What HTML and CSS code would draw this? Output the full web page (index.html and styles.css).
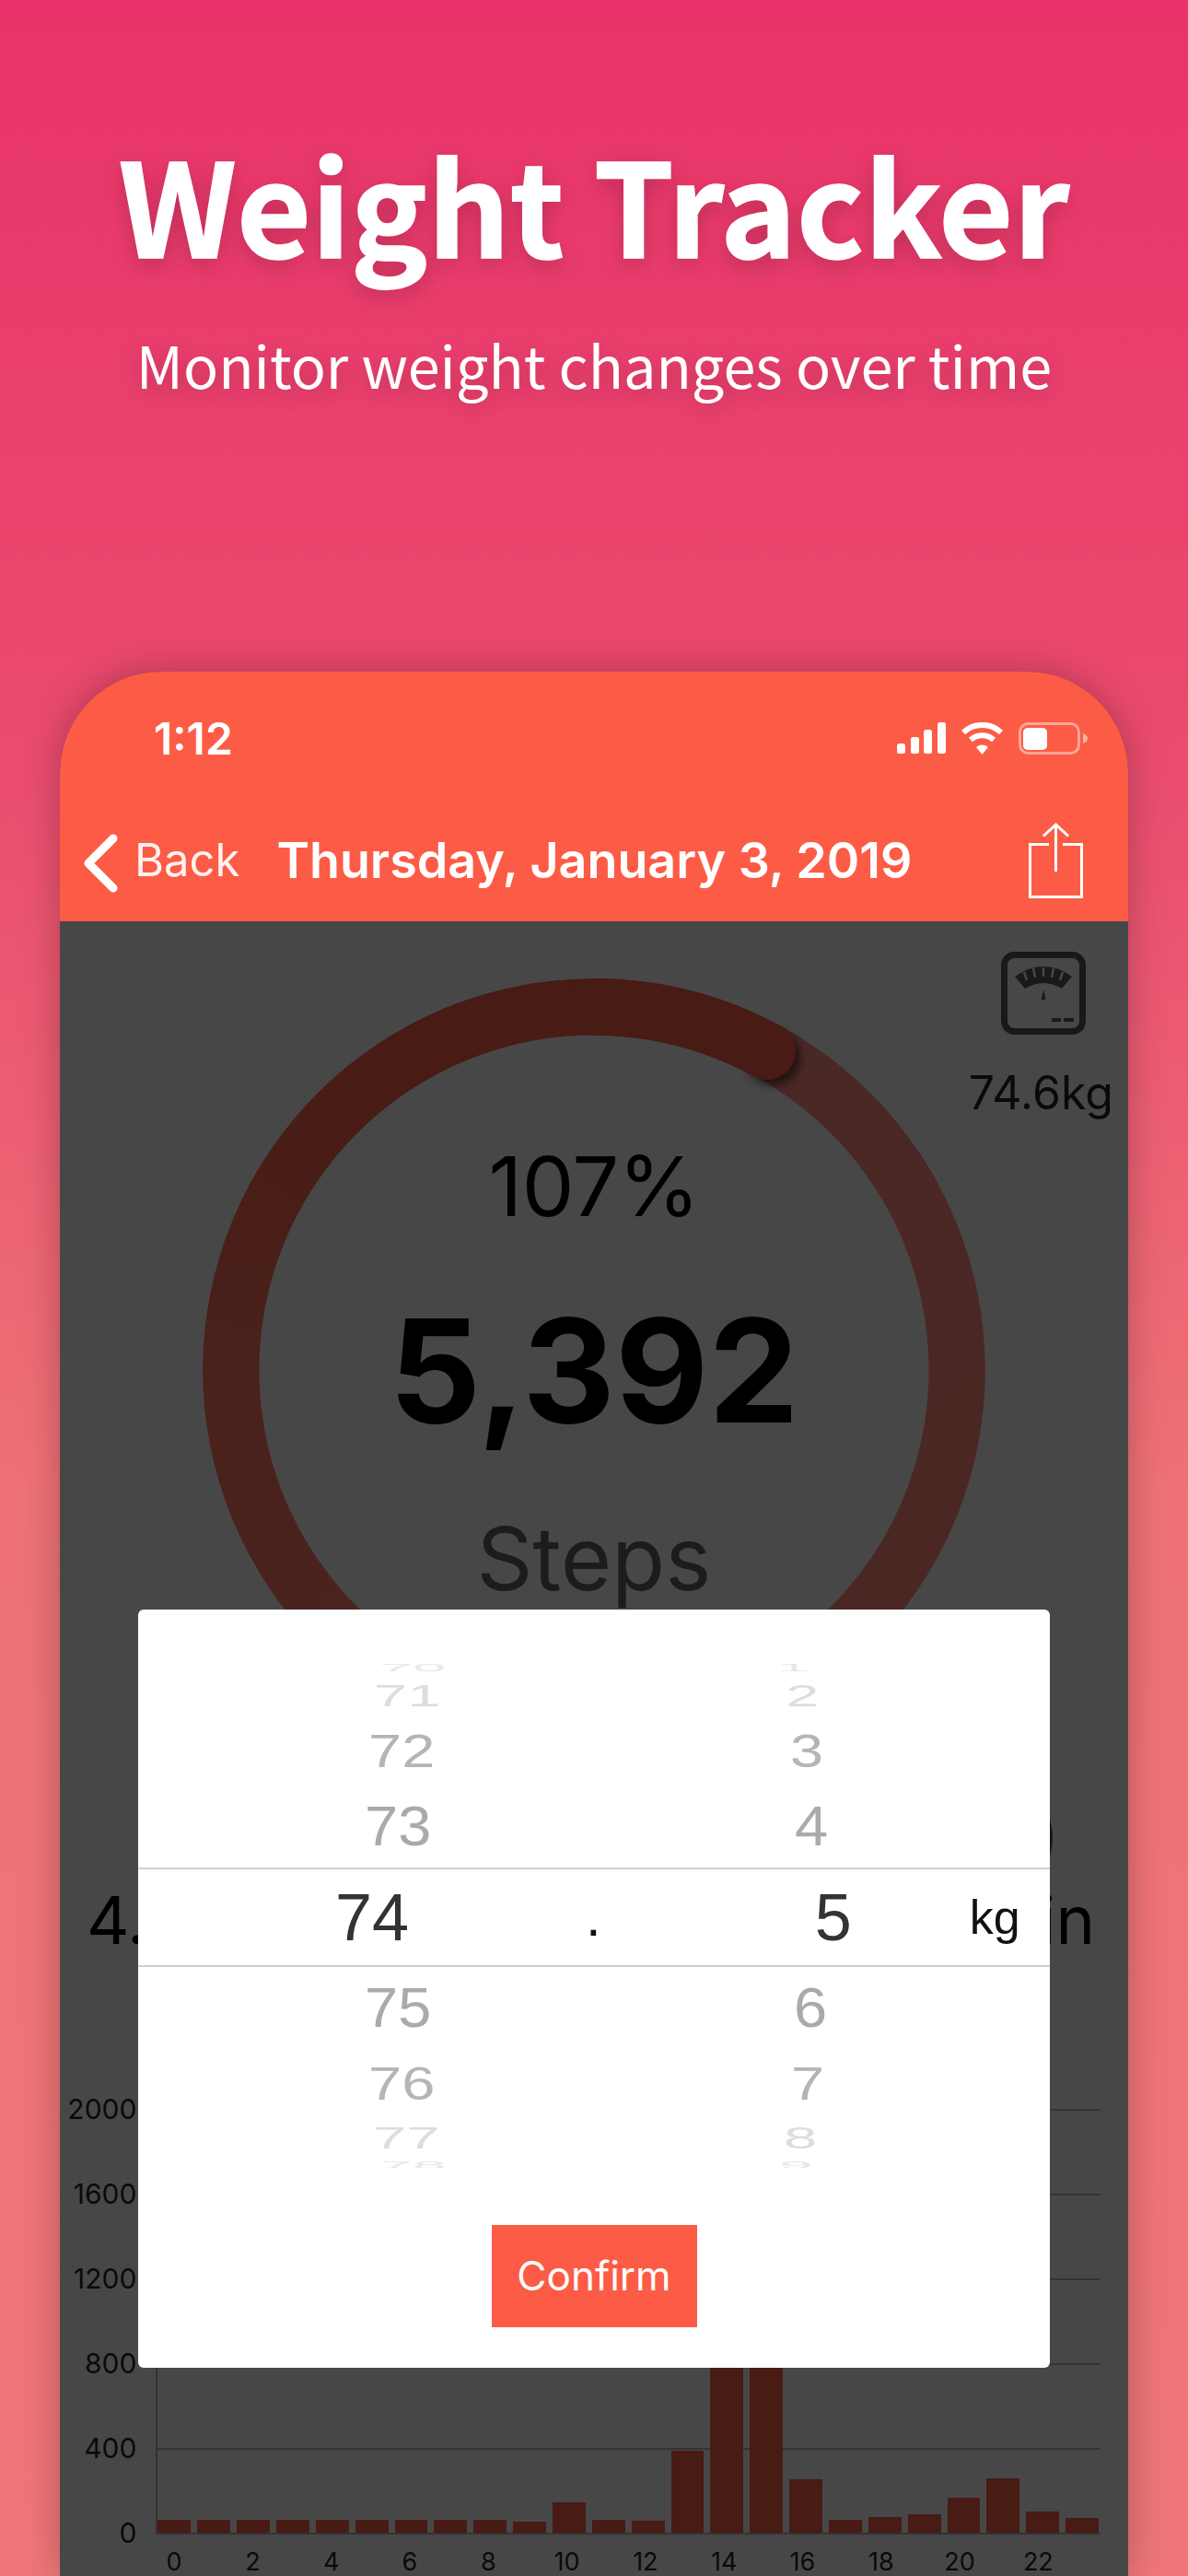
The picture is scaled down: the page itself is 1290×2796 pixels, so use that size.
FILE: index.html
```html
<!DOCTYPE html>
<html>
<head lang="en">
    <meta charset="UTF-8">
    <title>Weight Tracker</title>
    <link rel="stylesheet" href="styles.css">
</head>
<body>
<div class="page">
    <div class="hero">
        <h1>Weight Tracker</h1>
        <p>Monitor weight changes over time</p>
    </div>
    <div class="phone">
        <div class="status">
            <span class="time">1:12</span>
            <div class="status-icons">
                <svg width="53" height="34" viewBox="0 0 53 34"><g fill="#fff"><rect x="0" y="23" width="9" height="11" rx="2.5"/><rect x="15" y="16" width="9" height="18" rx="2.5"/><rect x="29" y="8" width="9" height="26" rx="2.5"/><rect x="44" y="0" width="9" height="34" rx="2.5"/></g></svg>
                <svg width="47" height="35" viewBox="0 0 47 35"><path d="M3 11 A30 30 0 0 1 44 11" fill="none" stroke="#fff" stroke-width="6"/><path d="M11 19 A19 19 0 0 1 36 19" fill="none" stroke="#fff" stroke-width="6"/><path d="M17 27 L23.500 35 L30 27 A10 10 0 0 0 17 27 Z" fill="#fff"/></svg>
                <svg width="75" height="35" viewBox="0 0 75 35"><rect x="1.500" y="1.500" width="64" height="32" rx="9" fill="none" stroke="#fff" stroke-opacity=".45" stroke-width="3"/><rect x="5" y="6" width="26" height="24" rx="5" fill="#fff"/><path d="M70 12 Q75 14 75 17.500 Q75 21 70 23 Z" fill="#fff" fill-opacity=".5"/></svg>
            </div>
        </div>
        <div class="nav">
            <svg class="chevron" width="38" height="64" viewBox="0 0 38 64"><path d="M33 5 L6 32 L33 59" fill="none" stroke="#fff" stroke-width="9" stroke-linecap="round" stroke-linejoin="round"/></svg>
            <span class="back">Back</span>
            <span class="date">Thursday, January 3, 2019</span>
            <svg class="share" width="59" height="82" viewBox="0 0 59 82"><path d="M22 23.500 H1.500 V80.500 H57.500 V23.500 H37" fill="none" stroke="#fff" stroke-width="3"/><path d="M29.500 53 V2 M16 14.500 L29.500 2 L43 14.500" fill="none" stroke="#fff" stroke-width="3"/></svg>
        </div>
        <div class="content">
            <div class="scale">
                <svg width="92" height="90" viewBox="0 0 92 90">
                    <rect x="3.500" y="3.500" width="85" height="83" rx="11" fill="none" stroke="#191919" stroke-width="7"/>
                    <path d="M15 27 Q46 5 77 27 L66 40 Q46 28 26 40 Z" fill="#191919"/>
                    <path d="M25 22 L28 31 M35 18 L37 28 M46 17 L46 27 M57 18 L55 28 M67 22 L64 31" stroke="#474748" stroke-width="2.500"/>
                    <path d="M46 41 L48.500 52 H43.500 Z" fill="#191919"/>
                    <rect x="55" y="72" width="10" height="4" fill="#191919"/>
                    <rect x="68" y="72" width="11" height="4" fill="#191919"/>
                </svg>
                <span class="weight">74.6kg</span>
            </div>
            <div class="ring-wrap">
                <div class="ring"></div>
                <svg class="ring-end" width="850" height="850" viewBox="0 0 850 850">
                    <circle class="ring-shadow" cx="619" cy="86" r="30"/>
                    <path d="M425 31 A394 394 0 0 1 613 79" fill="none" stroke="#481b14" stroke-width="62" stroke-linecap="round"/>
                </svg>
                <div class="ring-text">
                    <span class="percent">107%</span>
                    <span class="steps">5,392</span>
                    <span class="steps-label">Steps</span>
                </div>
            </div>
            <div class="stats">
                <span>4.0km</span>
                <div class="stat-right">
                    <svg class="clock" width="124" height="124" viewBox="0 0 124 124"><circle cx="62" cy="62" r="59" fill="none" stroke="#191919" stroke-width="4"/></svg>
                    <span>28min</span>
                </div>
            </div>
            <div class="chart">
                <div class="y-labels">
                    <span>2000</span>
                    <span>1600</span>
                    <span>1200</span>
                    <span>800</span>
                    <span>400</span>
                    <span>0</span>
                </div>
                <div class="plot">
                    <div class="grid"><i></i><i></i><i></i><i></i><i></i></div>
                    <div class="bars">
                        <b style="height:14px"></b><b style="height:14px"></b><b style="height:14px"></b><b style="height:14px"></b><b style="height:14px"></b><b style="height:14px"></b>
                        <b style="height:14px"></b><b style="height:14px"></b><b style="height:14px"></b><b style="height:12px"></b><b style="height:33px"></b><b style="height:14px"></b>
                        <b style="height:13px"></b><b style="height:89px"></b><b style="height:300px"></b><b style="height:300px"></b><b style="height:58px"></b><b style="height:14px"></b>
                        <b style="height:17px"></b><b style="height:20px"></b><b style="height:38px"></b><b style="height:59px"></b><b style="height:23px"></b><b style="height:16px"></b>
                    </div>
                    <div class="x-labels">
                        <span>0</span><span>2</span><span>4</span><span>6</span><span>8</span><span>10</span>
                        <span>12</span><span>14</span><span>16</span><span>18</span><span>20</span><span>22</span>
                    </div>
                </div>
            </div>
        </div>
        <div class="modal">
            <div class="picker">
                <div class="row r70"><span>70</span><span>1</span></div>
                <div class="row r71"><span>71</span><span>2</span></div>
                <div class="row r72"><span>72</span><span>3</span></div>
                <div class="row r73"><span>73</span><span>4</span></div>
                <div class="row current"><span class="int">74</span><span class="dot">.</span><span class="dec">5</span><span class="unit">kg</span></div>
                <div class="row r75"><span>75</span><span>6</span></div>
                <div class="row r76"><span>76</span><span>7</span></div>
                <div class="row r77"><span>77</span><span>8</span></div>
                <div class="row r78"><span>78</span><span>9</span></div>
            </div>
            <div class="confirm">Confirm</div>
        </div>
    </div>
</div>
</body>
</html>
```

FILE: styles.css
```css
html, body {
    margin: 0;
    padding: 0;
}
.page {
    width: 1290px;
    height: 2796px;
    overflow: hidden;
    background: linear-gradient(180deg, #e9336a 0%, #ea4a6e 28%, #ee7276 58%, #ee7678 100%);
    font-family: Inter, "Liberation Sans", sans-serif;
}

/* top title */
.hero {
    height: 729px;
    box-sizing: border-box;
    padding-top: 154px;
    text-align: center;
    color: #fff;
    font-family: "Noto Sans CJK SC", "Noto Sans", sans-serif;
    text-shadow: 0 8px 24px rgba(0, 0, 0, .2);
}
.hero h1 {
    margin: 0;
    height: 130px;
    line-height: 130px;
    font-size: 140px;
    font-weight: 700;
    white-space: nowrap;
    -webkit-text-stroke: 1.500px #fff;
}
.hero p {
    margin: 0;
    padding-top: 71px;
    height: 80px;
    line-height: 80px;
    font-size: 63px;
    font-weight: 400;
}

/* phone */
.phone {
    position: relative;
    margin: 0 65px;
    height: 2067px;
    border-radius: 110px 110px 0 0;
    box-shadow: 0 0 40px rgba(0, 0, 0, .25);
    background: #474748;
}
.status {
    height: 144px;
    display: flex;
    align-items: center;
    justify-content: space-between;
    padding: 0 44px 0 102px;
    background: #fc5c46;
    border-radius: 110px 110px 0 0;
    color: #fff;
}
.time {
    font-size: 48px;
    font-weight: 600;
}
.status-icons {
    display: flex;
    align-items: center;
    gap: 16px;
}
.nav {
    height: 128px;
    box-sizing: border-box;
    display: flex;
    align-items: center;
    padding: 0 49px 6px 25px;
    background: #fc5c46;
    border-bottom: 1px solid #3c4a4c;
    color: #fff;
}
.chevron {
    margin-top: 6px;
}
.back {
    margin-left: 18px;
    margin-right: 40px;
    font-size: 49px;
    opacity: .92;
}
.date {
    font-size: 53.800px;
    font-weight: 600;
    white-space: nowrap;
}
.share {
    margin-left: auto;
}

/* dimmed page under the dialog */
.content {
    position: relative;
    height: 1795px;
    overflow: hidden;
}
.scale {
    position: absolute;
    top: 32px;
    right: 16px;
    display: flex;
    flex-direction: column;
    align-items: flex-end;
    gap: 38px;
}
.scale svg {
    margin-right: 30px;
}
.weight {
    font-size: 50px;
    line-height: 50px;
    color: #0a0a0a;
}
.ring-wrap {
    display: grid;
    width: 850px;
    height: 850px;
    margin: 61px auto 0;
}
.ring-wrap > * {
    grid-area: 1 / 1;
    position: relative;
}
.ring {
    border-radius: 50%;
    background: conic-gradient(from 29.500deg, #4a2825 0deg, #4b2622 150deg, #4a211b 240deg, #481b14 300deg, #481b14 360deg);
    -webkit-mask: radial-gradient(circle, transparent 363px, #000 364px);
    mask: radial-gradient(circle, transparent 363px, #000 364px);
}
.ring-shadow {
    fill: rgba(0, 0, 0, .55);
    filter: blur(5px);
}
.ring-text {
    display: flex;
    flex-direction: column;
    align-items: center;
    padding-top: 171px;
    color: #000;
}
.percent {
    font-size: 90px;
    letter-spacing: -.5px;
    line-height: 110px;
}
.steps {
    margin-top: 50px;
    font-size: 156px;
    line-height: 190px;
    font-weight: 700;
}
.steps-label {
    margin-top: 54px;
    font-size: 95px;
    line-height: 110px;
    color: #1c1c1d;
}
.stats {
    display: flex;
    justify-content: space-between;
    align-items: flex-end;
    height: 100px;
    margin-top: 122px;
    padding: 0 36px 0 29px;
    font-size: 72px;
    line-height: 100px;
    color: #000;
}
.stat-right {
    width: 214px;
    height: 100px;
    display: flex;
    flex-direction: column;
    justify-content: flex-end;
    align-items: center;
}
.clock {
    flex: none;
    margin-bottom: -23px;
}
.stat-right span {
    align-self: flex-end;
}
.chart {
    display: flex;
    margin-top: 155px;
    padding-right: 30px;
}
.y-labels {
    width: 87px;
    height: 496px;
    display: flex;
    flex-direction: column;
    justify-content: space-between;
    align-items: flex-end;
    margin-top: -18px;
    font-size: 30px;
    line-height: 36px;
    color: #0a0a0a;
}
.plot {
    flex: 1;
    margin-left: 21px;
    display: grid;
}
.grid, .bars {
    grid-area: 1 / 1;
    height: 462px;
}
.grid {
    display: flex;
    flex-direction: column;
    border-left: 2px solid #333;
    border-bottom: 2px solid #333;
    box-sizing: border-box;
}
.grid i {
    display: block;
    height: 92px;
    box-sizing: border-box;
    border-top: 2px solid #333;
}
.bars {
    display: flex;
    align-items: flex-end;
    gap: 7px;
    padding: 0 2px 2px;
    box-sizing: border-box;
    overflow: hidden;
}
.bars b {
    display: block;
    flex: 1;
    background: #481b14;
}
.x-labels {
    grid-area: 2 / 1;
    display: flex;
    padding: 13px 0 0 2px;
    font-size: 27px;
    line-height: 34px;
    color: #0a0a0a;
}
.x-labels span {
    flex: none;
    width: 85.300px;
    box-sizing: border-box;
    padding-right: 50px;
    text-align: center;
    white-space: nowrap;
}

/* weight dialog */
.modal {
    position: absolute;
    left: 85px;
    top: 1018px;
    width: 990px;
    height: 823px;
    box-sizing: border-box;
    padding-top: 58px;
    background: #fff;
    border-radius: 6px;
    display: flex;
    flex-direction: column;
    align-items: center;
}
.picker {
    width: 100%;
    height: 548px;
    overflow: hidden;
    font-family: "Liberation Sans", Arial, sans-serif;
    font-size: 65px;
}
.row {
    display: flex;
    align-items: center;
    color: #aaa;
    line-height: 1;
}
.row span {
    width: 60px;
    text-align: center;
    white-space: nowrap;
    transform: translateX(var(--l)) scaleY(var(--s));
}
.row span:first-child {
    margin-left: 251px;
}
.row span:nth-child(2) {
    margin-left: 375px;
    transform: translateX(var(--r)) scaleY(var(--s));
}
.r70 { height: 10px; color: #e8e8e8; --s: .16; --l: 11px; --r: -5px; }
.r71 { height: 50px; color: #ddd; --s: .5; --l: 5px; --r: 5px; }
.r72 { height: 70px; color: #b5b5b5; --s: .77; --l: -1px; --r: 10px; }
.r73 { height: 92px; --s: .95; --l: -5px; --r: 15px; }
.r75 { height: 86px; --s: .95; --l: -5px; --r: 14px; }
.r76 { height: 80px; color: #b5b5b5; --s: .77; --l: -1px; --r: 11px; }
.r77 { height: 38px; color: #ddd; --s: .5; --l: 4px; --r: 3px; }
.r78 { height: 22px; color: #e8e8e8; --s: .16; --l: 11px; --r: -2px; }
.row.current {
    height: 108px;
    box-sizing: border-box;
    border-top: 2px solid #cfcfcf;
    border-bottom: 2px solid #cfcfcf;
    color: #333;
    font-size: 72px;
    --s: 1; --l: 0px; --r: 0px;
}
.row.current span {
    width: auto;
    margin: 0;
}
.row.current .int {
    margin-left: 214px;
}
.row.current .dot {
    margin-left: 192px;
    font-size: 60px;
    color: #111;
}
.row.current .dec {
    margin-left: 232px;
}
.row.current .unit {
    margin-left: 128px;
    font-size: 52px;
    color: #111;
}
.confirm {
    width: 223px;
    height: 111px;
    margin-top: 62px;
    background: #fc5c46;
    color: #fff;
    text-align: center;
    font-size: 44px;
    line-height: 111px;
}
```
